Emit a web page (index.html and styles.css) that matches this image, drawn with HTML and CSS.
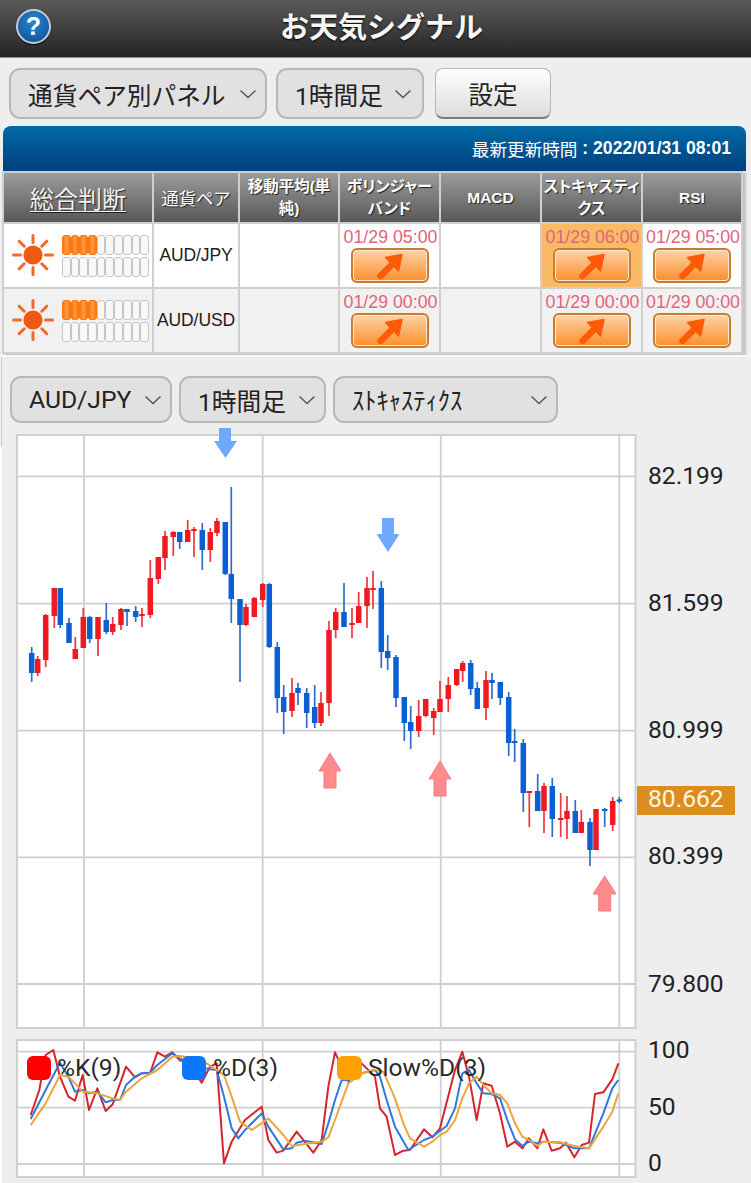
FILE: index.html
```html
<!DOCTYPE html>
<html lang="ja">
<head>
<meta charset="utf-8">
<title>お天気シグナル</title>
<link rel="stylesheet" href="styles.css">
</head>
<body>
<svg class="defs" width="0" height="0" aria-hidden="true">
  <defs>
    <symbol id="chev" viewBox="0 0 18 10"><path d="M1.5 1.5 9 8.5 16.5 1.5" fill="none" stroke="#555" stroke-width="1.4"/></symbol>
    <symbol id="sun" viewBox="0 0 44 44">
      <circle cx="22" cy="22" r="9.6" fill="#ee5a14"/>
      <path d="M22 2.5V9.5M22 34.5V41.500M2.500 22H9.500M34.500 22H41.500M8.200 8.200 13.200 13.200M30.800 30.800 35.800 35.800M8.200 35.800 13.200 30.800M30.800 13.200 35.800 8.200" stroke="#f2682a" stroke-width="3" stroke-linecap="round" fill="none"/>
    </symbol>
    <symbol id="up" viewBox="0 0 28 28">
      <path d="M4.500 24 16 12.500" stroke="#ff5a08" stroke-width="6.500" stroke-linecap="round" fill="none"/>
      <path d="M9.500 5.500 26 2.500 22.500 19Z" fill="#ff5a08" stroke="#ff5a08" stroke-width="1.500" stroke-linejoin="round"/>
    </symbol>
  </defs>
</svg>

<header class="topbar">
  <span class="help">?</span>
  <h1 class="title">お天気シグナル</h1>
</header>

<div class="toolbar">
  <div class="select sel-panel"><span>通貨ペア別パネル</span><svg class="chev"><use href="#chev"/></svg></div>
  <div class="select sel-time"><span>1時間足</span><svg class="chev"><use href="#chev"/></svg></div>
  <div class="btn-setting">設定</div>
</div>

<section class="panel">
  <div class="panel-head"><span class="head-label">最新更新時間</span>&nbsp;: 2022/01/31 08:01</div>
  <table class="grid">
    <thead>
      <tr>
        <th class="th-main">総合判断</th>
        <th class="th-pair">通貨ペア</th>
        <th>移動平均(単<br>純)</th>
        <th>ボリンジャー<br>バンド</th>
        <th>MACD</th>
        <th>ストキャスティ<br>クス</th>
        <th>RSI</th>
      </tr>
    </thead>
    <tbody>
      <tr>
        <td class="judge">
          <svg class="sun"><use href="#sun"/></svg>
          <div class="meter">
            <i class="on"></i><i class="on"></i><i class="on"></i><i class="on"></i><i></i><i></i><i></i><i></i><i></i><i></i>
            <i></i><i></i><i></i><i></i><i></i><i></i><i></i><i></i><i></i><i></i>
          </div>
        </td>
        <td class="pair">AUD/JPY</td>
        <td></td>
        <td class="sig"><span class="time">01/29 05:00</span><span class="sbtn"><svg class="up"><use href="#up"/></svg></span></td>
        <td></td>
        <td class="sig hot"><span class="time">01/29 06:00</span><span class="sbtn"><svg class="up"><use href="#up"/></svg></span></td>
        <td class="sig"><span class="time">01/29 05:00</span><span class="sbtn"><svg class="up"><use href="#up"/></svg></span></td>
      </tr>
      <tr>
        <td class="judge">
          <svg class="sun"><use href="#sun"/></svg>
          <div class="meter">
            <i class="on"></i><i class="on"></i><i class="on"></i><i class="on"></i><i></i><i></i><i></i><i></i><i></i><i></i>
            <i></i><i></i><i></i><i></i><i></i><i></i><i></i><i></i><i></i><i></i>
          </div>
        </td>
        <td class="pair">AUD/USD</td>
        <td></td>
        <td class="sig"><span class="time">01/29 00:00</span><span class="sbtn"><svg class="up"><use href="#up"/></svg></span></td>
        <td></td>
        <td class="sig"><span class="time">01/29 00:00</span><span class="sbtn"><svg class="up"><use href="#up"/></svg></span></td>
        <td class="sig"><span class="time">01/29 00:00</span><span class="sbtn"><svg class="up"><use href="#up"/></svg></span></td>
      </tr>
    </tbody>
  </table>
</section>

<section class="chart-section">
  <div class="chart-controls">
    <div class="select sm sel-pair"><span>AUD/JPY</span><svg class="chev"><use href="#chev"/></svg></div>
    <div class="select sm sel-tf"><span>1時間足</span><svg class="chev"><use href="#chev"/></svg></div>
    <div class="select sm sel-ind"><span class="hankaku">ｽﾄｷｬｽﾃｨｸｽ</span><svg class="chev"><use href="#chev"/></svg></div>
  </div>

  <svg class="main-chart" viewBox="0 434 751 595" width="751" height="595">
    <rect class="plot" x="17" y="435" width="618.500" height="593"/>
    <path class="gridline" d="M84 435V1028M262.700 435V1028M440.700 435V1028M619.300 435V1028M17 476.300H635.500M17 603.700H635.500M17 730.700H635.500M17 857.300H635.500M17 984H635.500"/>

    <path class="wick-r" d="M37.700 656V676M45.700 614V667M54.300 588V628M75.300 637V659M83.300 608V648M98 617V656M112.700 617V635M121 608V630M142 608V627M150.300 560V618M158.300 557V584M165 531V570M173.300 531V556M187.700 520V542M194 527V557M210.300 528V562M217 518V536M246 604V626M254.300 597V617M262.700 583V607M292 678V717M321 692V726M329 621V716M335.700 608V638M352 608V638M358.700 592V623M367 577V628M373 571V609M418.700 700V737M425.700 699V717M433.700 708V735M440 681V712M448.300 677V712M456.700 669V686M462.700 661V682M486 671V720M529.300 791V827M544 783V833M560.700 793V837M567 796V839M581.300 810V833M596 809V850M612.700 797V831"/>
    <path class="wick-b" d="M31.700 647V682M60.300 588V628M69 618V643M89.700 616V643M106.300 603V634M127 609V626M135.700 606V622M179.700 532V549M202.300 523V570M225.300 522V575M231.300 487V623M240 599V682M269.300 583V648M277.300 642V713M283.700 685V734M298 683V705M306.700 688V728M314.700 685V728M344 583V627M381.300 581V668M387.700 635V670M396 655V707M404.300 697V741M410.700 706V749M470.700 660V695M477.300 682V709M492 673V699M500.300 682V705M508.700 692V756M514.700 729V762M523.300 739V812M537.700 774V811M552.300 778V837M575.300 800V833M590 818V866M604.700 808V827M619.300 797V803"/>
    <path class="body-r" d="M37.700 659V673M45.700 615V660M54.300 588V616M75.300 649V659M83.300 617V648M98 617V639M112.700 624V632M121 609V625M142 614V616M150.300 578V615M158.300 557V579M165 536V558M173.300 532V537M187.700 530V542M194 529V531M210.300 532V550M217 521V533M246 607V625M254.300 598V617M262.700 584V600M292 693V711M321 703V723M329 630V703M335.700 612V630M352 623V625M358.700 606V623M367 588V606M373 588V590M418.700 716V731M425.700 699V716M433.700 711V718M440 699V712M448.300 685V699M456.700 669V685M462.700 663V671M486 680V708M529.300 791V793M544 786V811M560.700 818V820M567 811V819M581.300 822V833M596 809V850M612.700 801V825"/>
    <path class="body-b" d="M31.700 653V673M60.300 588V625M69 623V643M89.700 617V639M106.300 620V632M127 609V612M135.700 611V617M179.700 532V542M202.300 530V550M225.300 522V574M231.300 574V599M240 599V625M269.300 584V647M277.300 647V698M283.700 697V712M298 688V693M306.700 693V713M314.700 707V723M344 612V627M381.300 588V652M387.700 651V658M396 657V698M404.300 697V723M410.700 722V731M470.700 663V689M477.300 688V709M492 680V683M500.300 682V698M508.700 697V743M514.700 741V743M523.300 743V793M537.700 791V811M552.300 786V819M575.300 811V833M590 822V850M604.700 809V811M619.300 799.500V801.500"/>

    <path class="sig-down" d="M219 428H231V441H237L225.500 458 214 441H219Z"/>
    <path class="sig-down" d="M382 518H394V534H399.500L388 552 376.500 534H382Z"/>
    <path class="sig-up" d="M330 753 341 771H336V788H324V771H319Z"/>
    <path class="sig-up" d="M440 761 451 779H446V796H434V779H429Z"/>
    <path class="sig-up" d="M604.700 876 616 894H610.700V911H598.700V894H593Z"/>

    <text class="tick" x="648" y="484">82.199</text>
    <text class="tick" x="648" y="611">81.599</text>
    <text class="tick" x="648" y="737.500">80.999</text>
    <text class="tick" x="648" y="864">80.399</text>
    <text class="tick" x="648" y="992">79.800</text>
    <rect class="price-tag" x="637" y="786" width="98" height="29"/>
    <text class="tick price" x="648" y="807">80.662</text>
  </svg>

  <svg class="sub-chart" viewBox="0 1039 751 144" width="751" height="144">
    <rect class="plot" x="17" y="1040" width="618.500" height="137"/>
    <path class="gridline" d="M84 1040V1177M262.700 1040V1177M440.700 1040V1177M619.300 1040V1177M17 1051.700H635.500M17 1107.700H635.500M17 1164H635.500"/>

    <g transform="translate(0 1020) scale(.33333)">
      <polyline class="ln-k" points="92,285 118,210 137,105 160,90 180,170 205,230 225,242 248,165 267,270 292,205 317,273 338,253 378,140 405,172 425,160 450,160 472,97 495,110 517,97 540,122 560,120 605,188 630,140 650,130 672,430 695,365 735,300 785,260 805,360 830,398 850,392 890,335 940,398 965,360 985,200 1005,97 1045,185 1085,130 1125,170"/>
      <polyline class="ln-d" points="92,297 137,210 180,128 205,170 225,215 248,210 267,220 292,215 317,247 338,240 360,240 378,195 405,170 425,160 450,158 472,135 517,100 540,115 570,130 630,148 650,150 672,230 695,325 715,355 735,330 785,280 805,320 850,388 875,385 890,368 915,362 965,372 985,310 1005,240 1025,180 1045,180 1085,160 1125,150"/>
      <polyline class="ln-s" points="92,315 137,250 180,165 205,170 225,190 248,215 292,220 338,235 360,240 378,215 425,175 472,150 517,110 540,108 580,115 620,130 672,165 695,230 720,305 755,330 785,310 805,295 850,345 875,378 915,372 965,365 985,352 1005,300 1025,245 1045,190 1085,160 1125,150"/>
    </g>
    <g transform="translate(375 1020) scale(.33333)">
      <polyline class="ln-k" points="0,170 15,265 35,290 60,405 85,392 105,390 147,328 172,352 195,325 240,150 262,95 282,170 305,300 325,190 350,197 375,280 397,380 420,365 442,385 462,355 487,385 505,328 530,392 555,385 573,368 598,412 620,375 642,368 660,222 685,217 712,178 730,130"/>
      <polyline class="ln-d" points="0,150 15,170 35,240 60,320 100,390 147,360 172,350 215,318 240,265 262,160 282,150 305,190 325,220 350,222 375,235 397,300 420,358 442,378 462,365 487,370 505,365 555,368 573,375 598,385 642,385 685,280 712,205 730,180"/>
      <polyline class="ln-s" points="0,150 25,155 60,235 85,310 105,355 147,380 172,365 195,345 215,335 240,300 262,235 282,190 305,170 325,195 350,220 375,225 397,250 420,310 442,350 462,360 487,378 505,365 555,367 598,378 642,385 685,320 712,275 730,220"/>
    </g>

    <rect class="lg-k" x="27" y="1056" width="24" height="24" rx="6"/>
    <text class="legend" x="57" y="1076">%K(9)</text>
    <rect class="lg-d" x="182" y="1056" width="24" height="24" rx="6"/>
    <text class="legend" x="213" y="1076">%D(3)</text>
    <rect class="lg-s" x="337" y="1056" width="25" height="24" rx="6"/>
    <text class="legend" x="368" y="1076">Slow%D(3)</text>

    <text class="tick" x="648" y="1058">100</text>
    <text class="tick" x="648" y="1115">50</text>
    <text class="tick" x="648" y="1171">0</text>
  </svg>
</section>
</body>
</html>
```

FILE: styles.css
```css
* { box-sizing: border-box; }

html, body {
  margin: 0;
  padding: 0;
}

body {
  width: 751px;
  height: 1183px;
  overflow: hidden;
  background: #eeeeee;
  color: #222;
  font-family: "Liberation Sans", "Noto Sans CJK JP", sans-serif;
}

.defs { position: absolute; }

/* top bar */
.topbar {
  height: 58px;
  display: flex;
  align-items: center;
  justify-content: center;
  padding: 0 0 7px 12px;
  background: linear-gradient(#5a5a5a, #242424);
  border-bottom: 1px solid #8c8c8c;
  position: relative;
}

.title {
  margin: 0;
  font: 700 29px "Noto Sans CJK JP", sans-serif;
  line-height: 40px;
  color: #f6f6f6;
  text-shadow: 0 1px 2px #000;
}

.help {
  position: absolute;
  left: 16px;
  top: 9px;
  width: 35px;
  height: 35px;
  border-radius: 50%;
  border: 2.500px solid #c5ccd4;
  background: radial-gradient(circle at 50% 35%, #2a86d0, #0b4c96);
  color: #fff;
  font: 700 25px/30px "Liberation Sans", sans-serif;
  text-align: center;
  box-shadow: 0 1px 1px #111;
}

/* selects */
.toolbar {
  height: 68px;
  padding-top: 10px;
  padding-left: 9px;
  display: flex;
  gap: 9px;
}

.select {
  height: 51px;
  display: flex;
  align-items: center;
  justify-content: space-between;
  border: 2px solid #b8b8b8;
  border-radius: 11px;
  background: #e1e1e1;
  padding: 0 8px 0 17px;
  font: 400 24.700px "Roboto", "Noto Sans CJK JP", sans-serif;
  color: #222;
  white-space: nowrap;
}

.chev {
  width: 18px;
  height: 10px;
  flex: none;
}

.sel-panel { width: 258px; }
.sel-time { width: 148px; padding-right: 10px; }

.btn-setting {
  width: 116px;
  height: 51px;
  margin-left: 2px;
  display: flex;
  align-items: center;
  justify-content: center;
  border: 1.500px solid #b5b5b5;
  border-bottom: 2px solid #7d7d7d;
  border-radius: 8px;
  background: linear-gradient(#ffffff, #dcdcdc);
  font: 400 24.500px "Noto Sans CJK JP", sans-serif;
  letter-spacing: 0;
}

/* signal panel */
.panel {
  width: 743px;
  margin-left: 3px;
  height: 229px;
}

.panel-head {
  height: 45px;
  padding: 0 15px 0 0;
  display: flex;
  align-items: center;
  justify-content: flex-end;
  border-radius: 8px 8px 0 0;
  background: linear-gradient(#006aa6, #00407e);
  color: #fff;
  font: 700 17.600px "Liberation Sans", "Noto Sans CJK JP", sans-serif;
}

.head-label {
  font: 400 17.600px "Noto Sans CJK JP", sans-serif;
}

.grid {
  width: 739px;
  margin: 0 0 0 -1px;
  table-layout: fixed;
  border-collapse: collapse;
  box-shadow: 3px 2px 2px #c2c2c2;
}

.grid th:nth-child(1) { width: 150px; }
.grid th:nth-child(2) { width: 86px; }
.grid th:nth-child(3) { width: 100px; }
.grid th:nth-child(4) { width: 101px; }
.grid th:nth-child(5) { width: 101px; }
.grid th:nth-child(6) { width: 101px; }
.grid th:nth-child(7) { width: 100px; }

.grid th,
.grid td {
  border: 2px solid #cfcfcf;
  padding: 0;
  text-align: center;
}

.grid thead tr { height: 51px; }
.grid tbody tr { height: 65px; }
.grid tbody tr:nth-child(1) { background: #fff; }
.grid tbody tr:nth-child(2) { background: #f1f1f1; }

.grid th {
  background: linear-gradient(#9c9c9c, #585858);
  color: #fff;
  font: 700 15.500px/22px "Liberation Sans", "Noto Sans CJK JP", sans-serif;
  font-feature-settings: "palt";
  text-shadow: 1px 1px 1px #222;
}

.grid .th-main {
  font: 400 24px/30px "Noto Sans CJK JP", sans-serif;
  color: #f2f2f2;
  text-decoration: underline;
  text-underline-offset: 3px;
  text-decoration-thickness: 1px;
}

.grid .th-pair {
  font: 400 17.300px/22px "Noto Sans CJK JP", sans-serif;
}

.judge {
  position: relative;
}

.judge .sun {
  position: absolute;
  left: 7px;
  top: 9px;
  width: 44px;
  height: 44px;
}

.meter {
  position: absolute;
  left: 58px;
  top: 11px;
  width: 88px;
  display: grid;
  grid-template-columns: repeat(10, 8.700px);
  grid-auto-rows: 20px;
  row-gap: 2px;
}

.meter i {
  display: block;
  width: 8.700px;
  border: 1.700px solid #c6c6c6;
  border-radius: 3px;
  background: #f8f8f8;
}

.meter .on {
  border-color: #ff7708;
  background: linear-gradient(90deg, #ff7708, #ff9a4a 50%, #ff7708);
}

.grid .pair {
  font: 400 17.500px "Liberation Sans", sans-serif;
  color: #1c1c1c;
  letter-spacing: -0.100px;
}

.grid .sig {
  vertical-align: top;
  padding-top: 3px;
}

.grid .hot { background: #f9ba66; }

.time {
  display: block;
  height: 21px;
  padding-left: 2px;
  font: 400 17.800px/21px "Liberation Sans", sans-serif;
  color: #e2647c;
  white-space: nowrap;
}

.sbtn {
  display: flex;
  align-items: center;
  justify-content: center;
  width: 78px;
  height: 35px;
  margin: 0 auto;
  border: 2px solid #c67d30;
  border-radius: 6px;
  background: linear-gradient(#fdd2a8, #fb8f2c);
  box-shadow: inset 0 0 0 1px #ffe9d3;
}

.up {
  width: 28px;
  height: 28px;
}

/* chart section */
.chart-section {
  position: relative;
  border-left: 2px solid #fff;
  height: 828px;
}

.chart-section::before {
  content: "";
  position: absolute;
  left: -2px;
  top: 0;
  width: 2px;
  height: 92px;
  background: linear-gradient(90deg, #f2f2f2 50%, #cccccc 50%);
}

.chart-section::after {
  content: "";
  position: absolute;
  left: -2px;
  right: 0;
  top: 0;
  height: 2px;
  background: #f7f7f7;
}

.chart-controls {
  height: 79px;
  padding: 21px 0 0 8px;
  display: flex;
  gap: 7px;
}

.select.sm {
  height: 47px;
  padding-left: 17px;
}

.sel-pair { width: 162px; }
.sel-tf { width: 147px; }
.sel-ind { width: 225px; }

.hankaku {
  font-family: "Noto Sans CJK JP", sans-serif;
  font-size: 24.500px;
  line-height: 30px;
}

.main-chart,
.sub-chart {
  display: block;
  margin-left: -2px;
  overflow: visible;
}

.main-chart { margin-bottom: 10px; }

.plot {
  fill: #fff;
  stroke: #cfcfcf;
  stroke-width: 2;
}

.gridline {
  fill: none;
  stroke: #cfcfcf;
  stroke-width: 1.800;
}

.wick-r, .wick-b, .body-r, .body-b { fill: none; }
.wick-r { stroke: #e9383f; stroke-width: 1.700; }
.wick-b { stroke: #2f6cce; stroke-width: 1.700; }
.body-r { stroke: #ef1a1f; stroke-width: 5.500; }
.body-b { stroke: #0a60d2; stroke-width: 5.500; }

.sig-down { fill: #6fa9fd; }
.sig-up { fill: #fd8b8e; stroke: #f87a80; stroke-width: 1; }

.tick {
  font: 400 24.600px "Roboto", sans-serif;
  fill: #222;
}

.price-tag { fill: #dd8d20; }
.tick.price { fill: #fff6de; }

.legend {
  font: 400 24.600px "Roboto", sans-serif;
  fill: #2a2a2a;
}

.ln-k, .ln-d, .ln-s {
  fill: none;
  stroke-width: 6;
  stroke-linejoin: round;
}

.ln-k { stroke: #d8242c; }
.ln-d { stroke: #2f78de; }
.ln-s { stroke: #eda43c; }

.lg-k { fill: #ff0000; }
.lg-d { fill: #0a78ff; }
.lg-s { fill: #ff9f00; }
```
